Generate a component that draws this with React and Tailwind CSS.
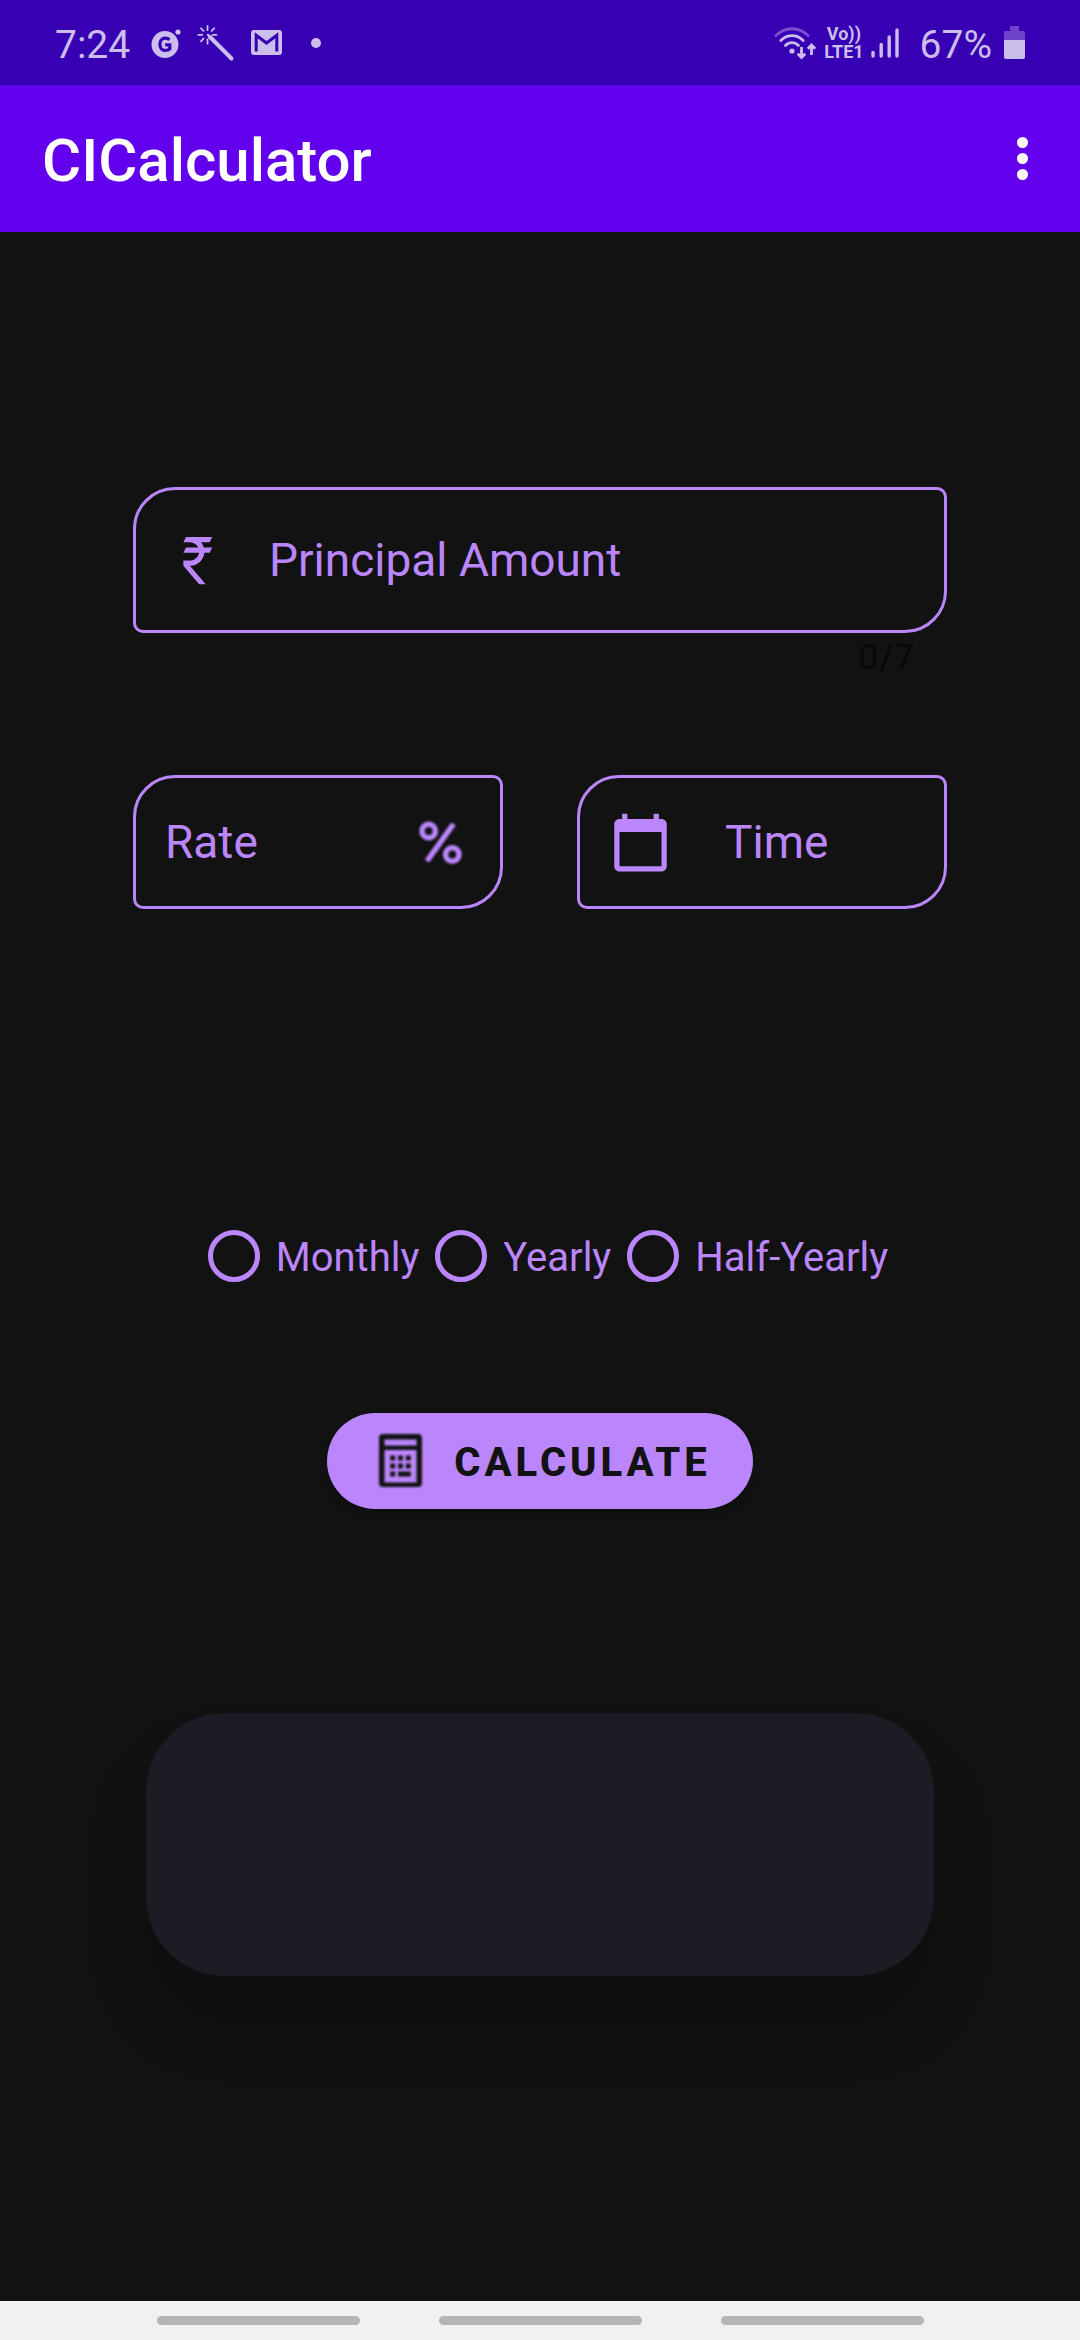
import React, { useState } from "react";

const fieldBox =
  "flex items-center rounded-tl-[42px] rounded-tr-[10px] rounded-br-[42px] rounded-bl-[10px] border-3 border-[#bb86fc]";
const fieldInput =
  "w-full min-w-0 flex-1 bg-transparent text-[46px] leading-[56px] text-[#bb86fc] placeholder:text-[#bb86fc] placeholder:opacity-100 outline-none";

function GameIcon() {
  return (
    <svg className="h-[34px] w-[30px]" viewBox="0 0 30 34" aria-hidden="true">
      <circle cx="14" cy="18.5" r="13.5" fill="#cbbeed" />
      <circle cx="27" cy="6" r="2.6" fill="#cbbeed" />
      <path
        d="M18.5 13.8C17.2 12.6 15.8 12.2 14.2 12.2c-3.4 0-5.3 2.7-5.3 6.1s1.900 6.200 5.300 6.200c2 0 3.500-.5 4.600-1.600v-4h-4.600"
        fill="none"
        stroke="#3700b3"
        strokeWidth="3.2"
      />
    </svg>
  );
}

function WandIcon() {
  return (
    <svg className="size-[38px]" viewBox="0 0 38 38" fill="none" stroke="#cbbeed" strokeLinecap="round" aria-hidden="true">
      <path d="M11 11L14 14" strokeWidth="2.400" />
      <path d="M13 13L34.500 34.500" strokeWidth="4" />
      <path
        d="M10.500 1.800v4.400M10.500 15.500v4.200M1.300 10.800h4M15.500 10.800h4M4 4.300l2.500 2.600M17.200 4.300l-2.600 2.600M4 17.300l2.500-2.600"
        strokeWidth="1.800"
      />
    </svg>
  );
}

function MailIcon() {
  return (
    <svg className="h-[25px] w-[31px]" viewBox="0 0 31 25" aria-hidden="true">
      <rect width="31" height="25" rx="3" fill="#cbbeed" />
      <path d="M5.200 21.500V5.200L15.500 13l10.300-7.800v16.300" fill="none" stroke="#3700b3" strokeWidth="3" />
    </svg>
  );
}

function WifiIcon() {
  return (
    <svg className="h-[34px] w-[43px]" viewBox="0 0 43 34" fill="none" aria-hidden="true">
      <g strokeWidth="2.800" strokeLinecap="round">
        <path d="M2 9.500C11.500.5 24.500.5 34 9.500" stroke="#7a52cf" />
        <path d="M6.800 14.500c6.600-6.400 15.800-6.400 22.400 0" stroke="#cbbeed" />
        <path d="M11.500 19.500c3.800-3.800 9.200-3.800 13 0" stroke="#cbbeed" />
      </g>
      <circle cx="18" cy="25" r="2.600" fill="#cbbeed" />
      <path d="M27.500 21v10M23.800 27.700l3.700 3.800 3.700-3.800M37.500 29V20M33.800 22.800l3.700-3.800 3.700 3.800" stroke="#cbbeed" strokeWidth="2.800" />
    </svg>
  );
}

function SignalIcon() {
  return (
    <svg className="h-[32px] w-[28px]" viewBox="0 0 28 32" stroke="#cbbeed" strokeWidth="3.400" strokeLinecap="round" aria-hidden="true">
      <path d="M2 25.500V29M10.200 17.500V29M18.200 10V29M26 3V29" />
    </svg>
  );
}

function BatteryIcon() {
  return (
    <svg className="h-[33px] w-[21px]" viewBox="0 0 21 33" aria-hidden="true">
      <path d="M6 0h9v5h4.500Q21 5 21 6.500V14H0V6.500Q0 5 1.500 5H6z" fill="#6f42cc" />
      <path d="M0 14h21v17q0 2-2 2H2q-2 0-2-2z" fill="#cbbeed" />
    </svg>
  );
}

function StatusBar() {
  return (
    <div className="flex h-[85px] items-center justify-between bg-[#3700b3] px-[55px] text-[39px] leading-[48px] text-[#cbbeed]">
      <div className="flex items-center">
        <span className="pt-[4px]">7:24</span>
        <span className="ml-[21px] flex items-center gap-4">
          <GameIcon />
          <WandIcon />
          <MailIcon />
        </span>
        <span className="ml-[29px] size-[10px] rounded-full bg-[#cbbeed]" />
      </div>
      <div className="flex items-center">
        <WifiIcon />
        <span className="ml-[7px] flex flex-col items-center text-[18px] leading-[18px] font-bold">
          <span>Vo))</span>
          <span>LTE1</span>
        </span>
        <span className="ml-[7px]">
          <SignalIcon />
        </span>
        <span className="ml-[21px] pt-[4px]">67%</span>
        <span className="ml-[12px]">
          <BatteryIcon />
        </span>
      </div>
    </div>
  );
}

function RupeeIcon() {
  return (
    <svg className="size-[63px] shrink-0" viewBox="0 0 24 24" fill="#bb86fc" aria-hidden="true">
      <path d="M8 3h10l-1 2h-3.260c.48.58.84 1.260 1.050 2H18l-1 2h-2c-.25 2.570-2.260 4.630-4.800 4.960V14h-.7l6 7H13l-6-7v-2h2.500c1.760 0 3.220-1.300 3.460-3H7l1-2h4.660C12.100 5.820 10.900 5 9.500 5H7z" />
    </svg>
  );
}

function PercentIcon() {
  return (
    <svg className="size-[63px] shrink-0 blur-[1px]" viewBox="0 0 63 63" fill="none" stroke="#bb86fc" aria-hidden="true">
      <circle cx="20.700" cy="20" r="6.700" strokeWidth="5.500" />
      <circle cx="44.300" cy="43.500" r="6.700" strokeWidth="5.500" />
      <path d="M45.500 13L19 50" strokeWidth="5.500" />
    </svg>
  );
}

function CalendarIcon() {
  return (
    <svg className="size-[63px] shrink-0" viewBox="0 0 24 24" fill="#bb86fc" aria-hidden="true">
      <path d="M20 3h-1V1h-2v2H7V1H5v2H4c-1.100 0-2 .9-2 2v16c0 1.100.9 2 2 2h16c1.100 0 2-.9 2-2V5c0-1.100-.9-2-2-2zm0 18H4V8h16v13z" />
    </svg>
  );
}

function CalculatorIcon() {
  return (
    <svg className="size-[63px] shrink-0 blur-[1px]" viewBox="0 0 63 63" fill="#121212" aria-hidden="true">
      <path
        fillRule="evenodd"
        d="M14 4h35q4 0 4 4v45q0 4-4 4H14q-4 0-4-4V8q0-4 4-4zM15.500 9.500v6h32v-6zM15.500 20v32.500h32V20z"
      />
      <path d="M21.200 25.500h5v5h-5zM29 25.500h5v5h-5zM36.800 25.500h5v5h-5zM21.200 33.500h5v5h-5zM29 33.500h5v5h-5zM36.800 33.500h5v5h-5zM21.200 41.500h5v5h-5zM29 41.500h12.800v5H29z" />
    </svg>
  );
}

const periods = ["Monthly", "Yearly", "Half-Yearly"];

export default function App() {
  const [amount, setAmount] = useState("");

  return (
    <div className="flex min-h-screen flex-col bg-[#121212] font-['Roboto',sans-serif]">
      <StatusBar />

      <header className="flex h-[147px] items-center justify-between bg-[#6200ee] pr-[31px] pl-[42px] text-white">
        <h1 className="pt-[4px] text-[60px] leading-[68px] font-medium">CICalculator</h1>
        <button type="button" aria-label="More options" className="flex w-[53px] flex-col items-center gap-[5px]">
          <span className="size-[11px] rounded-full bg-white" />
          <span className="size-[11px] rounded-full bg-white" />
          <span className="size-[11px] rounded-full bg-white" />
        </button>
      </header>

      <main className="flex flex-1 flex-col px-[133px] pt-[255px]">
        <div className={`${fieldBox} h-[146px] gap-[41px] pr-[32px] pl-[29px]`}>
          <RupeeIcon />
          <input
            className={fieldInput}
            aria-label="Principal Amount"
            placeholder="Principal Amount"
            inputMode="numeric"
            maxLength={7}
            value={amount}
            onChange={(e) => setAmount(e.target.value)}
          />
        </div>
        <p className="mt-[4px] h-[42px] pr-[32px] text-right text-[35px] leading-[42px] tracking-wide text-[#080808]">
          {amount.length}/7
        </p>

        <div className="mt-[96px] grid grid-cols-2 gap-[74px]">
          <div className={`${fieldBox} h-[134px] px-[29px]`}>
            <input className={fieldInput} aria-label="Rate" placeholder="Rate" inputMode="decimal" />
            <PercentIcon />
          </div>
          <div className={`${fieldBox} h-[134px] gap-[53px] px-[29px]`}>
            <CalendarIcon />
            <input className={fieldInput} aria-label="Time" placeholder="Time" inputMode="numeric" />
          </div>
        </div>

        <div
          role="radiogroup"
          aria-label="Compounding period"
          className="mt-[305px] flex h-[84px] items-center justify-center"
        >
          {periods.map((p) => (
            <label
              key={p}
              className="flex items-center gap-4 pl-4 text-[40px] leading-[48px] whitespace-nowrap text-[#bb86fc]"
            >
              <input
                type="radio"
                name="period"
                value={p}
                className="size-[52px] shrink-0 appearance-none rounded-full border-5 border-[#bb86fc] checked:bg-[#bb86fc] checked:bg-clip-content checked:p-[8px]"
              />
              <span className="pt-[4px]">{p}</span>
            </label>
          ))}
        </div>

        <button
          type="button"
          className="mt-[115px] flex h-[96px] items-center gap-[22px] self-center rounded-full bg-[#bb86fc] px-[42px] text-[40px] leading-[48px] font-extrabold tracking-widest text-[#121212] shadow-[0_4px_8px_rgba(0,0,0,0.2)]"
        >
          <CalculatorIcon />
          <span className="pt-[4px]">CALCULATE</span>
        </button>

        <section
          aria-label="Result"
          className="mx-[13px] mt-[204px] mb-[80px] h-[263px] rounded-[79px] bg-[#1f1b24] shadow-[0_50px_60px_rgba(0,0,0,0.22)]"
        />
      </main>

      <nav aria-label="System" className="flex h-[39px] items-center justify-center gap-[79px] bg-[#f1f1f1]">
        <button type="button" aria-label="Recent apps" className="h-[9px] w-[203px] rounded-full bg-[#b5b5b5]" />
        <button type="button" aria-label="Home" className="h-[9px] w-[203px] rounded-full bg-[#b5b5b5]" />
        <button type="button" aria-label="Back" className="h-[9px] w-[203px] rounded-full bg-[#b5b5b5]" />
      </nav>
    </div>
  );
}
